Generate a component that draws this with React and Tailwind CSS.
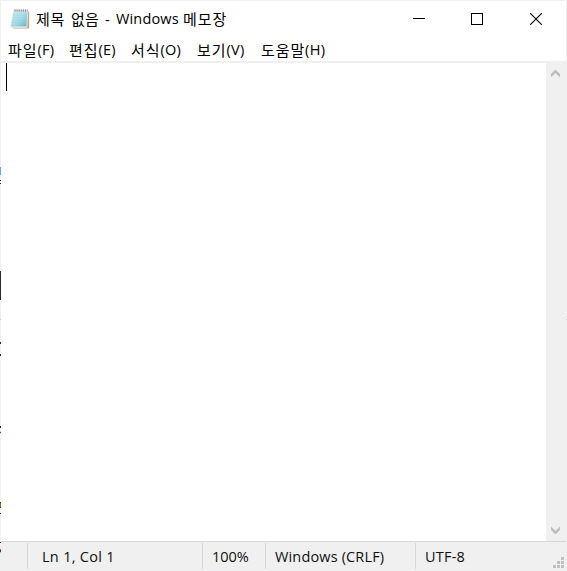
const marks = [
  { y: 167, h: 8, c: '#6aa5e2' },
  { y: 180, h: 1, c: '#303030' },
  { y: 183, h: 1, c: '#303030' },
  { y: 271, h: 29, c: '#2b2b2b' },
  { y: 319, h: 1, c: '#d0d0d0' },
  { y: 342, h: 2, c: '#303030' },
  { y: 354, h: 2, c: '#303030' },
  { y: 426, h: 2, c: '#222222' },
  { y: 431, h: 1, c: '#b5dcf5' },
  { y: 432, h: 1, c: '#2a5cae' },
  { y: 433, h: 1, c: '#b5dcf5' },
  { y: 502, h: 1, c: '#303030' },
  { y: 503, h: 4, c: '#a8620f' },
  { y: 507, h: 1, c: '#303030' },
  { y: 513, h: 1, c: '#303030' },
  { y: 542, h: 1, c: '#303030' },
  { y: 548, h: 1, c: '#f5d49a' },
  { y: 549, h: 1, c: '#c98230' },
  { y: 550, h: 1, c: '#402030' },
  { y: 551, h: 1, c: '#2a4a9a' },
  { y: 552, h: 1, c: '#9accf0' },
];

const menus = [
  { ko: '파일', key: '(F)', w: 'w-[61px]' },
  { ko: '편집', key: '(E)', w: 'w-[62px]' },
  { ko: '서식', key: '(O)', w: 'w-[66px]' },
  { ko: '보기', key: '(V)', w: 'w-[64px]' },
  { ko: '도움말', key: '(H)', w: 'w-[80px]' },
];

function NotepadIcon() {
  return (
    <svg width="20" height="21" viewBox="0 0 20 21">
      <defs>
        <linearGradient id="page" x1="0" y1="0" x2="1" y2="1">
          <stop offset="0" stopColor="#c9ebf3" />
          <stop offset="0.5" stopColor="#abdce8" />
          <stop offset="1" stopColor="#62b3ca" />
        </linearGradient>
      </defs>
      <path d="M17.8 2 L19.2 2.8 V19.6 H4 L0.3 18.2 L16 18.2 Z" fill="#c2a983" />
      <path d="M3.2 1.5 H18.4 L17.2 18.8 H0.2 Z" fill="#e3efee" />
      <path d="M3.6 1.8 H17.8 L16.4 17.6 H0.9 Z" fill="url(#page)" />
      <path d="M3.2 6 H16.6 M2.8 8.5 H16.4 M2.4 11 H16.2 M2 13.5 H15.9" stroke="#98d0dd" strokeWidth="0.5" />
      <path d="M4 1.6 H18" stroke="#dedbd8" strokeWidth="2" />
      <path d="M4.5 1.5 H17.5" stroke="#84898b" strokeWidth="2" strokeDasharray="1 1.1" />
    </svg>
  );
}

function Chevron({ down }) {
  return (
    <svg width="9" height="7" viewBox="0 0 9 7" className={down ? 'rotate-180' : ''}>
      <path d="M0 4 L4 0 H5 L9 4 V7 H8.6 L4.5 3 L0.4 7 H0 Z" fill="#bdbdbd" />
    </svg>
  );
}

export default function App() {
  return (
    <div className="relative flex h-[571px] w-[567px] flex-col overflow-hidden bg-[#f0f0f0] pt-px pl-px font-['Open_Sans','Noto_Sans_CJK_KR',sans-serif] text-[15px] leading-5 text-black">
      <header className="mr-px flex h-[37px] shrink-0 items-start bg-white">
        <div className="mt-2 ml-[9px] w-[26px]"><NotepadIcon /></div>
        <h1 className="mt-2 flex whitespace-pre font-normal">
          <span className="w-[35px] tracking-[0.6px]">제목</span>
          <span className="w-[34px] tracking-[0.3px]">없음</span>
          <span className="w-[11px]">-</span>
          <span className="w-[67px] text-[14.5px] tracking-[0.15px]">Windows</span>
          <span className="tracking-[1px]">메모장</span>
        </h1>
        <div className="mt-3 mr-[24px] ml-auto flex">
          <svg width="12" height="12" shapeRendering="crispEdges"><path d="M0 5.5H12" stroke="#000" /></svg>
          <svg width="12" height="12" className="ml-[46px]" shapeRendering="crispEdges"><path d="M.5 .5H11.5V11.5H.5Z" stroke="#000" fill="none" /></svg>
          <svg width="12" height="12" className="ml-[47px]"><path d="M.2 .2L11.8 11.8M11.8 .2L.2 11.8" stroke="#000" strokeWidth="1.1" /></svg>
        </div>
      </header>
      <nav className="mr-px flex h-[23px] shrink-0 bg-white pt-0.5 pl-[7px]">
        {menus.map((m) => (
          <button key={m.ko} className={`flex shrink-0 ${m.w}`}>
            <span className="tracking-[0.9px]">{m.ko}</span>
            <span className="text-[14.5px] tracking-[0.3px]">{m.key}</span>
          </button>
        ))}
      </nav>
      <main className="mt-0.5 flex h-[478px] shrink-0">
        <div className="w-[545px] bg-white pl-[5px]"><div className="h-7 w-px bg-black" /></div>
        <div className="flex w-[21px] flex-col items-center justify-between pt-[7px] pr-[2px] pb-[7px]">
          <Chevron />
          <Chevron down />
        </div>
      </main>
      <footer className="mr-px flex h-[30px] shrink-0 border-t border-[#d7d7d7] pt-px text-[14.5px] text-[#111]">
        <div className="h-[26px] w-[27px] border-r border-[#d7d7d7]" />
        <div className="h-[26px] w-[175px] border-r border-[#d7d7d7] pt-1 pl-[14px] tracking-[0.3px]">Ln 1, Col 1</div>
        <div className="h-[26px] w-[63px] border-r border-[#d7d7d7] pt-1 pl-[9px]">100%</div>
        <div className="h-[26px] w-[150px] border-r border-[#d7d7d7] pt-1 pl-[9px] tracking-[0.15px]">Windows (CRLF)</div>
        <div className="h-[26px] flex-1 pt-1 pl-[9px] tracking-[0.2px]">UTF-8</div>
        <svg width="11" height="11" className="mt-[14px] mr-[2px]" shapeRendering="crispEdges" fill="#bfbfbf">
          <path d="M8 0h3v3h-3zM4 4h3v3h-3zM8 4h3v3h-3zM0 8h3v3h-3zM4 8h3v3h-3zM8 8h3v3h-3z" />
        </svg>
      </footer>
      {marks.map((m) => (
        <i key={m.y} className="absolute left-0 w-px" style={{ top: m.y, height: m.h, background: m.c }} />
      ))}
      <i className="absolute top-[319px] right-0 h-px w-px bg-[#c8c8c8]" />
    </div>
  );
}
